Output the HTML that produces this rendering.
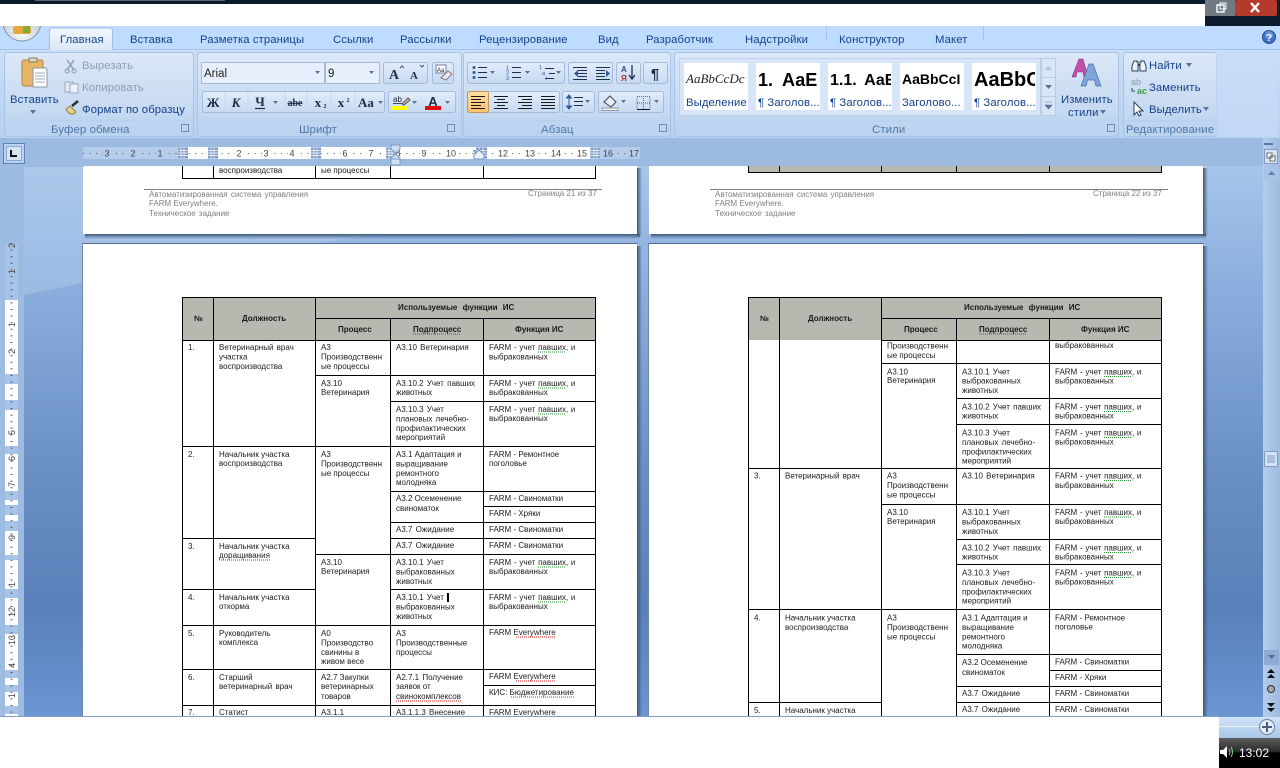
<!DOCTYPE html>
<html lang="ru"><head><meta charset="utf-8"><title>Word</title>
<style>
html,body{margin:0;padding:0;width:1280px;height:768px;overflow:hidden;background:#fff}
svg{display:block;font-family:"Liberation Sans",sans-serif}
.tab{font-size:11.3px;fill:#15428b;letter-spacing:.1px}
.rb{font-size:11.3px;fill:#15428b;letter-spacing:.1px}
.dis{font-size:11.3px;fill:#8b9db5;letter-spacing:.1px}
.gl{font-size:11.4px;fill:#4f76a8;letter-spacing:.1px}
.t{font-size:8px;fill:#1c1c1c}
.b{font-size:8px;font-weight:bold;fill:#1a1a1a}
.j{word-spacing:1px}
.k{word-spacing:.5px}
.f{font-size:8px;fill:#808080}
.rn{font-size:9px;fill:#444}
.l{stroke:#000;stroke-width:1;fill:none;shape-rendering:crispEdges}
.grp{fill:url(#btn);stroke:#a3bcdc;stroke-width:1}
.red{stroke:#d02020;stroke-width:1;stroke-dasharray:1 1;fill:none}
.grn{stroke:#2f9a3a;stroke-width:1;stroke-dasharray:1 1;fill:none}
.ar{fill:#5a7396}
.ic{stroke:#2a3f60;stroke-width:1;fill:none}
</style></head><body>
<svg width="1280" height="768" viewBox="0 0 1280 768" xmlns="http://www.w3.org/2000/svg">
<defs>
<linearGradient id="doc" x1="0" y1="0" x2="0" y2="1"><stop offset="0" stop-color="#a8c5ea"/><stop offset=".2" stop-color="#8db0df"/><stop offset=".55" stop-color="#6a8fc4"/><stop offset=".8" stop-color="#5a80ba"/><stop offset="1" stop-color="#6a96d2"/></linearGradient>
<linearGradient id="ribbon" x1="0" y1="0" x2="0" y2="1"><stop offset="0" stop-color="#c9def8"/><stop offset="1" stop-color="#b7d1f1"/></linearGradient>
<linearGradient id="group" x1="0" y1="0" x2="0" y2="1"><stop offset="0" stop-color="#dce8f8"/><stop offset=".75" stop-color="#c4d8f1"/><stop offset=".76" stop-color="#c0d7f1"/><stop offset="1" stop-color="#bbd3ef"/></linearGradient>
<linearGradient id="btn" x1="0" y1="0" x2="0" y2="1"><stop offset="0" stop-color="#e3edfa"/><stop offset="1" stop-color="#c5d9f2"/></linearGradient>
<linearGradient id="act" x1="0" y1="0" x2="0" y2="1"><stop offset="0" stop-color="#fde0a8"/><stop offset="1" stop-color="#fbc06c"/></linearGradient>
<linearGradient id="tabg" x1="0" y1="0" x2="0" y2="1"><stop offset="0" stop-color="#f2f7fe"/><stop offset="1" stop-color="#dce8f8"/></linearGradient>
<linearGradient id="shR" x1="0" y1="0" x2="1" y2="0"><stop offset="0" stop-color="#3f5878"/><stop offset="1" stop-color="#3f5878" stop-opacity="0"/></linearGradient>
<linearGradient id="shB" x1="0" y1="0" x2="0" y2="1"><stop offset="0" stop-color="#3f5878"/><stop offset="1" stop-color="#3f5878" stop-opacity="0"/></linearGradient>
<linearGradient id="sb" x1="0" y1="0" x2="1" y2="0"><stop offset="0" stop-color="#b6cdec"/><stop offset="1" stop-color="#9dbae0"/></linearGradient>
<linearGradient id="tb" x1="0" y1="0" x2="0" y2="1"><stop offset="0" stop-color="#5c5c5c"/><stop offset=".45" stop-color="#2c2c2c"/><stop offset=".5" stop-color="#000"/><stop offset="1" stop-color="#000"/></linearGradient>
<linearGradient id="st" x1="0" y1="0" x2="0" y2="1"><stop offset="0" stop-color="#d0e2f8"/><stop offset="1" stop-color="#a9c6ea"/></linearGradient>
<radialGradient id="orb" cx=".5" cy=".8" r=".7"><stop offset="0" stop-color="#fbfbf4"/><stop offset=".7" stop-color="#c8d2dc"/><stop offset="1" stop-color="#8898ae"/></radialGradient>
<clipPath id="s2"><rect x="757" y="63" width="62" height="30"/></clipPath>
<clipPath id="s3"><rect x="829" y="63" width="62" height="30"/></clipPath>
<clipPath id="s4"><rect x="901" y="63" width="62" height="30"/></clipPath>
<clipPath id="s5"><rect x="973" y="63" width="62" height="30"/></clipPath>
<clipPath id="s1"><rect x="685" y="63" width="62" height="30"/></clipPath>
</defs>

<!-- document background -->
<rect x="0" y="166" width="1280" height="552" fill="url(#doc)"/>
<path d="M24 166H640V190L83 283 24 295Z" fill="#b2cbec" opacity=".45"/>
<rect x="0" y="138" width="24" height="580" fill="#9ebbe2"/>

<!-- pages -->
<rect x="637" y="168" width="5" height="68" fill="url(#shR)"/>
<rect x="85" y="234" width="555" height="5" fill="url(#shB)"/>
<rect x="1203" y="168" width="5" height="68" fill="url(#shR)"/>
<rect x="651" y="234" width="555" height="5" fill="url(#shB)"/>
<rect x="637" y="246" width="5" height="472" fill="url(#shR)"/>
<rect x="1203" y="246" width="5" height="472" fill="url(#shR)"/>
<rect x="83" y="166" width="554" height="68" fill="#fff"/>
<rect x="649" y="166" width="554" height="68" fill="#fff"/>
<rect x="83" y="244" width="554" height="474" fill="#fff"/>
<rect x="649" y="244" width="554" height="474" fill="#fff"/>
<path d="M82.500 243.500H637.500M648.500 243.500H1203.500" stroke="#55708f" fill="none"/>
<path d="M82.500 243.500V718M648.500 243.500V718" stroke="#6f88a8" fill="none"/>

<!-- top slice page 21 -->
<path class="l" d="M182.500 166V178.500H595.500V166M213.500 166V178M315.500 166V178M390.500 166V178M483.500 166V178"/>
<text class="t" x="219" y="173">воспроизводства</text>
<text class="t" x="321" y="173">ые процессы</text>
<path d="M144 189.500H602" stroke="#808080"/>
<text class="f j" x="149" y="197">Автоматизированная система управления</text>
<text class="f" x="149" y="206">FARM Everywhere.</text>
<text class="f j" x="149" y="216">Техническое задание</text>
<text class="f" x="528" y="196">Страница 21 из 37</text>

<!-- top slice page 22 -->
<rect x="748" y="166" width="414" height="6" fill="#b8b8b0"/>
<path class="l" d="M748.500 166V172.500H1161.500V166M779.500 166V172M881.500 166V172M956.500 166V172M1049.500 166V172"/>
<path d="M710 189.500H1168" stroke="#808080"/>
<text class="f j" x="715" y="197">Автоматизированная система управления</text>
<text class="f" x="715" y="206">FARM Everywhere.</text>
<text class="f j" x="715" y="216">Техническое задание</text>
<text class="f" x="1093" y="196">Страница 22 из 37</text>

<!-- table 1 -->
<rect x="182" y="297" width="414" height="43" fill="#b8b8b0"/>
<path class="l" d="M182.500 716V297.500H595.500V716M213.500 297V716M315.500 297V716M390.500 318V716M483.500 318V716
M315 318.500H596M182 340.500H596M315 375.500H596M390 401.500H596M182 446.500H596M390 491.500H596M483 506.500H596M390 522.500H596
M182 538.500H316M390 538.500H596M315 554.500H596M182 589.500H316M390 589.500H596M182 625.500H596M182 669.500H596M483 685.500H596M182 705.500H596"/>
<text class="b" x="194" y="321">№</text>
<text class="b" x="242" y="321">Должность</text>
<text class="b" x="398" y="310" style="word-spacing:3px">Используемые функции ИС</text>
<text class="b" x="338" y="332">Процесс</text>
<text class="b" x="413" y="332">Подпроцесс</text>
<path class="red" d="M413 334H461"/>
<text class="b" x="515" y="332">Функция ИС</text>

<text class="t" x="188" y="350">1.</text>
<text class="t j" x="219" y="350">Ветеринарный врач</text><text class="t" x="219" y="359.500">участка</text><text class="t" x="219" y="369">воспроизводства</text>
<text class="t" x="321" y="350">А3</text><text class="t" x="321" y="359.500">Производственн</text><text class="t" x="321" y="369">ые процессы</text>
<text class="t j" x="396" y="350">А3.10 Ветеринария</text>
<text class="t k" x="489" y="350">FARM - учет павших, и</text><text class="t" x="489" y="359.500">выбракованных</text><path class="grn" d="M538 352H565"/>

<text class="t" x="321" y="386">А3.10</text><text class="t" x="321" y="395">Ветеринария</text>
<text class="t j" x="396" y="386">А3.10.2 Учет павших</text><text class="t" x="396" y="395">животных</text>
<text class="t k" x="489" y="386">FARM - учет павших, и</text><text class="t" x="489" y="395">выбракованных</text><path class="grn" d="M538 388H565"/>

<text class="t j" x="396" y="412">А3.10.3 Учет</text><text class="t j" x="396" y="421.500">плановых лечебно-</text><text class="t" x="396" y="431">профилактических</text><text class="t" x="396" y="440">мероприятий</text>
<text class="t k" x="489" y="412">FARM - учет павших, и</text><text class="t" x="489" y="421">выбракованных</text><path class="grn" d="M538 414H565"/>

<text class="t" x="188" y="457">2.</text>
<text class="t" x="219" y="457">Начальник участка</text><text class="t" x="219" y="466">воспроизводства</text>
<text class="t" x="321" y="457">А3</text><text class="t" x="321" y="466.500">Производственн</text><text class="t" x="321" y="476">ые процессы</text>
<text class="t" x="396" y="457">А3.1 Адаптация и</text><text class="t" x="396" y="466.500">выращивание</text><text class="t" x="396" y="476">ремонтного</text><text class="t" x="396" y="485">молодняка</text>
<text class="t" x="489" y="457">FARM - Ремонтное</text><text class="t" x="489" y="466">поголовье</text>

<text class="t" x="396" y="501">А3.2 Осеменение</text><text class="t" x="396" y="511">свиноматок</text>
<text class="t" x="489" y="501">FARM - Свиноматки</text>
<text class="t" x="489" y="516">FARM - Хряки</text>
<text class="t j" x="396" y="532">А3.7 Ожидание</text><text class="t" x="489" y="532">FARM - Свиноматки</text>

<text class="t" x="188" y="549">3.</text>
<text class="t" x="219" y="549">Начальник участка</text><text class="t" x="219" y="558">доращивания</text><path class="red" d="M219 560H270"/>
<text class="t j" x="396" y="548">А3.7 Ожидание</text><text class="t" x="489" y="548">FARM - Свиноматки</text>

<text class="t" x="321" y="565">А3.10</text><text class="t" x="321" y="574">Ветеринария</text>
<text class="t j" x="396" y="565">А3.10.1 Учет</text><text class="t" x="396" y="574.500">выбракованных</text><text class="t" x="396" y="584">животных</text>
<text class="t k" x="489" y="565">FARM - учет павших, и</text><text class="t" x="489" y="574">выбракованных</text><path class="grn" d="M538 567H565"/>

<text class="t" x="188" y="600">4.</text>
<text class="t" x="219" y="600">Начальник участка</text><text class="t" x="219" y="609">откорма</text>
<text class="t j" x="396" y="600">А3.10.1 Учет</text><text class="t" x="396" y="609.500">выбракованных</text><text class="t" x="396" y="619">животных</text>
<rect x="447" y="593" width="2" height="9" fill="#000"/>
<text class="t k" x="489" y="600">FARM - учет павших, и</text><text class="t" x="489" y="609">выбракованных</text><path class="grn" d="M538 602H565"/>

<text class="t" x="188" y="636">5.</text>
<text class="t" x="219" y="636">Руководитель</text><text class="t" x="219" y="645">комплекса</text>
<text class="t" x="321" y="636">А0</text><text class="t" x="321" y="645.500">Производство</text><text class="t" x="321" y="655">свинины в</text><text class="t" x="321" y="664">живом весе</text>
<text class="t" x="396" y="636">А3</text><text class="t" x="396" y="645.500">Производственные</text><text class="t" x="396" y="655">процессы</text>
<text class="t" x="489" y="635">FARM Everywhere</text><path class="red" d="M516 637H556"/>

<text class="t" x="188" y="680">6.</text>
<text class="t" x="219" y="680">Старший</text><text class="t j" x="219" y="689">ветеринарный врач</text>
<text class="t" x="321" y="680">А2.7 Закупки</text><text class="t" x="321" y="689">ветеринарных</text><text class="t" x="321" y="699">товаров</text>
<text class="t j" x="396" y="680">А2.7.1 Получение</text><text class="t" x="396" y="689">заявок от</text><text class="t" x="396" y="699">свинокомплексов</text><path class="red" d="M396 701H461"/>
<text class="t" x="489" y="679">FARM Everywhere</text><path class="red" d="M516 681H556"/>
<text class="t" x="489" y="695">КИС: Бюджетирование</text><path class="red" d="M511 697H574"/>

<text class="t" x="188" y="715">7.</text><text class="t" x="219" y="715">Статист</text><text class="t" x="321" y="715">А3.1.1</text>
<text class="t j" x="396" y="715">А3.1.1.3 Внесение</text><text class="t" x="489" y="715">FARM Everywhere</text>

<!-- table 2 -->
<rect x="748" y="297" width="414" height="43" fill="#b8b8b0"/>
<path class="l" d="M748.500 716V297.500H1161.500V716M779.500 297V716M881.500 297V716M956.500 318V716M1049.500 318V716
M881 318.500H1162M881 340.500H1162M881 363.500H1162M956 398.500H1162M956 424.500H1162M748 468.500H1162M881 504.500H1162M956 539.500H1162M956 564.500H1162
M748 609.500H1162M956 654.500H1162M1049 670.500H1162M956 686.500H1162M748 702.500H882M956 702.500H1162"/>
<text class="b" x="760" y="321">№</text>
<text class="b" x="808" y="321">Должность</text>
<text class="b" x="964" y="310" style="word-spacing:3px">Используемые функции ИС</text>
<text class="b" x="904" y="332">Процесс</text>
<text class="b" x="979" y="332">Подпроцесс</text>
<path class="red" d="M979 334H1027"/>
<text class="b" x="1081" y="332">Функция ИС</text>

<text class="t" x="887" y="348.500">Производственн</text><text class="t" x="887" y="358">ые процессы</text>
<text class="t" x="1055" y="348">выбракованных</text>

<text class="t" x="887" y="374.500">А3.10</text><text class="t" x="887" y="383">Ветеринария</text>
<text class="t j" x="962" y="374.500">А3.10.1 Учет</text><text class="t" x="962" y="383.500">выбракованных</text><text class="t" x="962" y="393">животных</text>
<text class="t k" x="1055" y="374.500">FARM - учет павших, и</text><text class="t" x="1055" y="383.500">выбракованных</text><path class="grn" d="M1104 376.500H1131"/>

<text class="t j" x="962" y="409.500">А3.10.2 Учет павших</text><text class="t" x="962" y="418.500">животных</text>
<text class="t k" x="1055" y="409.500">FARM - учет павших, и</text><text class="t" x="1055" y="418.500">выбракованных</text><path class="grn" d="M1104 411.500H1131"/>

<text class="t j" x="962" y="435.500">А3.10.3 Учет</text><text class="t j" x="962" y="445">плановых лечебно-</text><text class="t" x="962" y="454.500">профилактических</text><text class="t" x="962" y="463.500">мероприятий</text>
<text class="t k" x="1055" y="435.500">FARM - учет павших, и</text><text class="t" x="1055" y="444.500">выбракованных</text><path class="grn" d="M1104 437.500H1131"/>

<text class="t" x="754" y="478.500">3.</text><text class="t j" x="785" y="478.500">Ветеринарный врач</text>
<text class="t" x="887" y="478.500">А3</text><text class="t" x="887" y="488">Производственн</text><text class="t" x="887" y="497.500">ые процессы</text>
<text class="t j" x="962" y="478.500">А3.10 Ветеринария</text>
<text class="t k" x="1055" y="478.500">FARM - учет павших, и</text><text class="t" x="1055" y="488">выбракованных</text><path class="grn" d="M1104 480.500H1131"/>

<text class="t" x="887" y="515">А3.10</text><text class="t" x="887" y="524">Ветеринария</text>
<text class="t j" x="962" y="515">А3.10.1 Учет</text><text class="t" x="962" y="524.500">выбракованных</text><text class="t" x="962" y="534">животных</text>
<text class="t k" x="1055" y="515">FARM - учет павших, и</text><text class="t" x="1055" y="524">выбракованных</text><path class="grn" d="M1104 517H1131"/>

<text class="t j" x="962" y="550.500">А3.10.2 Учет павших</text><text class="t" x="962" y="559.500">животных</text>
<text class="t k" x="1055" y="550.500">FARM - учет павших, и</text><text class="t" x="1055" y="559.500">выбракованных</text><path class="grn" d="M1104 552.500H1131"/>

<text class="t j" x="962" y="575.500">А3.10.3 Учет</text><text class="t j" x="962" y="585">плановых лечебно-</text><text class="t" x="962" y="594.500">профилактических</text><text class="t" x="962" y="603.500">мероприятий</text>
<text class="t k" x="1055" y="575.500">FARM - учет павших, и</text><text class="t" x="1055" y="584.500">выбракованных</text><path class="grn" d="M1104 577.500H1131"/>

<text class="t" x="754" y="620.500">4.</text><text class="t" x="785" y="620.500">Начальник участка</text><text class="t" x="785" y="630">воспроизводства</text>
<text class="t" x="887" y="620.500">А3</text><text class="t" x="887" y="630">Производственн</text><text class="t" x="887" y="639.500">ые процессы</text>
<text class="t" x="962" y="620.500">А3.1 Адаптация и</text><text class="t" x="962" y="630">выращивание</text><text class="t" x="962" y="639.500">ремонтного</text><text class="t" x="962" y="648.500">молодняка</text>
<text class="t" x="1055" y="620.500">FARM - Ремонтное</text><text class="t" x="1055" y="629.500">поголовье</text>

<text class="t" x="962" y="665">А3.2 Осеменение</text><text class="t" x="962" y="675">свиноматок</text>
<text class="t" x="1055" y="664.500">FARM - Свиноматки</text>
<text class="t" x="1055" y="680">FARM - Хряки</text>
<text class="t j" x="962" y="696">А3.7 Ожидание</text><text class="t" x="1055" y="696">FARM - Свиноматки</text>
<text class="t" x="754" y="713">5.</text><text class="t" x="785" y="713">Начальник участка</text>
<text class="t j" x="962" y="712">А3.7 Ожидание</text><text class="t" x="1055" y="712">FARM - Свиноматки</text>

<!-- scrollbar -->
<rect x="1263" y="138" width="17" height="580" fill="url(#sb)"/>
<rect x="1264" y="143" width="9" height="2" fill="#5a7aa6"/>
<rect x="1264.500" y="149.500" width="13" height="14" fill="#d8e4f3" stroke="#7f9ac0"/>
<path d="M1267 153h5v5h-5zM1270 156h5v5h-5z" fill="#fff" stroke="#445" stroke-width=".8"/>
<rect x="1264" y="166" width="15" height="14" fill="#a8c3e6"/>
<path d="M1268 175l3.500-4 3.500 4z" fill="#5f7fa8"/>
<rect x="1264.500" y="451.500" width="13" height="15" rx="1" fill="#d3e2f5" stroke="#7f9ac0"/>
<path d="M1267 456h8M1267 458h8M1267 460h8M1267 462h8" stroke="#7f9ac0"/>
<rect x="1264" y="650" width="15" height="15" fill="#8faad0"/>
<path d="M1268 655l3.500 4 3.500-4z" fill="#4f6d96"/>
<path d="M1267 673h8l-4-4zM1267 678h8l-4-4z" fill="#111"/>
<circle cx="1271" cy="689" r="3.500" fill="#a0a8b0" stroke="#333"/>
<path d="M1267 703h8l-4 4zM1267 708h8l-4 4z" fill="#111"/>

<!-- vertical ruler -->
<rect x="5" y="243" width="13" height="473" fill="#a8c3e8"/>
<path fill="#fff" d="M5 300h13v74H5zM5 384h13v16H5zM5 410h13v36H5zM5 454h13v37H5zM5 500h13v5H5zM5 515h13v6H5zM5 531h13v24H5zM5 560h13v29H5zM5 598h13v27H5zM5 634h13v36H5zM5 678h13v7H5zM5 692h13v14H5zM5 714h13v2H5z"/>
<path d="M11.500 243V716" stroke="#555" stroke-dasharray="1 5.600" stroke-width="2"/>
<g class="rn">
<text transform="translate(15 248) rotate(-90)">2</text><text transform="translate(15 274) rotate(-90)">1</text>
<text transform="translate(15 327) rotate(-90)">1</text><text transform="translate(15 354) rotate(-90)">2</text>
<text transform="translate(15 435) rotate(-90)">5</text><text transform="translate(15 461) rotate(-90)">6</text>
<text transform="translate(15 487) rotate(-90)">7</text><text transform="translate(15 540) rotate(-90)">9</text>
<text transform="translate(15 587) rotate(-90)">1</text><text transform="translate(15 617) rotate(-90)">12</text>
<text transform="translate(15 645) rotate(-90)">13</text><text transform="translate(15 668) rotate(-90)">4</text>
<text transform="translate(15 698) rotate(-90)">1</text>
</g>

<!-- ruler row -->
<rect x="0" y="138" width="1263" height="28" fill="#9dbae1"/>
<rect x="24" y="166" width="60" height="1" fill="#8aa8d2" opacity=".5"/>
<rect x="3.500" y="143.500" width="21" height="20" fill="#bcd3f0" stroke="#5b84bd"/>
<rect x="6.500" y="146.500" width="15" height="14" fill="#d6e4f6" stroke="#8ba8d0"/>
<path d="M11 150v6h6" stroke="#111" stroke-width="2" fill="none"/>
<rect x="83" y="147" width="557" height="12" fill="#b5cceb"/>
<path fill="#fff" d="M188 147h20v12h-20zM218 147h93v12h-93zM321 147h65v12h-65zM396 147h80v12h-80zM487 147h103v12H487z"/>
<path d="M83 153.500H640" stroke="#555" stroke-dasharray="1 5.600"/>
<g fill="#7f99c4">
<rect x="178" y="148" width="10" height="10"/><rect x="208" y="148" width="10" height="10"/><rect x="311" y="148" width="10" height="10"/><rect x="386" y="148" width="10" height="10"/><rect x="476" y="148" width="11" height="10"/><rect x="591" y="148" width="9" height="10"/>
</g>
<g stroke="#fff" stroke-width=".7"><path d="M178 150.500h10M178 153h10M178 155.500h10M181 148v10M184 148v10M208 150.500h10M208 153h10M208 155.500h10M211 148v10M214 148v10M311 150.500h10M311 153h10M311 155.500h10M314 148v10M317 148v10M386 150.500h10M386 153h10M386 155.500h10M389 148v10M392 148v10M476 150.500h11M476 153h11M476 155.500h11M479 148v10M483 148v10M591 150.500h9M591 153h9M591 155.500h9M594 148v10M597 148v10"/></g>
<g class="rn" text-anchor="middle">
<rect x="103" y="148" width="8" height="10" fill="#b5cceb"/><rect x="129" y="148" width="8" height="10" fill="#b5cceb"/><rect x="156" y="148" width="8" height="10" fill="#b5cceb"/>
<rect x="235" y="148" width="8" height="10" fill="#fff"/><rect x="262" y="148" width="8" height="10" fill="#fff"/><rect x="288" y="148" width="8" height="10" fill="#fff"/><rect x="341" y="148" width="8" height="10" fill="#fff"/><rect x="367" y="148" width="8" height="10" fill="#fff"/><rect x="420" y="148" width="8" height="10" fill="#fff"/><rect x="445" y="148" width="12" height="10" fill="#fff"/><rect x="497" y="148" width="12" height="10" fill="#fff"/><rect x="524" y="148" width="12" height="10" fill="#fff"/><rect x="550" y="148" width="12" height="10" fill="#fff"/><rect x="576" y="148" width="12" height="10" fill="#fff"/>
<rect x="602" y="148" width="12" height="10" fill="#b5cceb"/><rect x="628" y="148" width="12" height="10" fill="#b5cceb"/>
<text x="107" y="156.500">3</text><text x="133" y="156.500">2</text><text x="160" y="156.500">1</text><text x="239" y="156.500">2</text><text x="266" y="156.500">3</text><text x="292" y="156.500">4</text><text x="345" y="156.500">6</text><text x="371" y="156.500">7</text><text x="398" y="156.500">8</text><text x="424" y="156.500">9</text><text x="451" y="156.500">10</text><text x="477" y="156.500">11</text><text x="503" y="156.500">12</text><text x="530" y="156.500">13</text><text x="556" y="156.500">14</text><text x="582" y="156.500">15</text><text x="608" y="156.500">16</text><text x="634" y="156.500">17</text>
</g>
<path d="M391 145h9v4l-4.500 4-4.500-4zM391 158l4.500-4 4.500 4v4h-9z" fill="#cfe0f5" stroke="#7f99c4"/>
<rect x="391" y="159" width="9" height="6" fill="#cfe0f5" stroke="#7f99c4"/>
<path d="M474 159v-4l5-5 5 5v4z" fill="#e8f0fb" stroke="#7f99c4"/>

<!-- ribbon -->
<rect x="0" y="26" width="1280" height="24" fill="#bfdbff"/>
<rect x="0" y="50" width="1280" height="88" fill="url(#ribbon)"/>
<path d="M0 49.500H1280" stroke="#a5c3e8"/>
<path d="M49.500 50V31q0-3 3-3h57q3 0 3 3V50" fill="url(#tabg)" stroke="#9fbfe3"/>
<path d="M826.500 26V41M983.500 26V41" stroke="#a9c3e3"/>
<circle cx="22" cy="22" r="19" fill="url(#orb)" stroke="#8195ad"/>
<rect x="13" y="26" width="18" height="8" rx="2" fill="#e8a93a"/><rect x="23" y="26" width="7" height="7" fill="#7fae3c"/>

<text class="tab" x="60" y="43">Главная</text>
<text class="tab" x="130" y="43">Вставка</text>
<text class="tab" x="200" y="43">Разметка страницы</text>
<text class="tab" x="333" y="43">Ссылки</text>
<text class="tab" x="400" y="43">Рассылки</text>
<text class="tab" x="479" y="43">Рецензирование</text>
<text class="tab" x="598" y="43">Вид</text>
<text class="tab" x="646" y="43">Разработчик</text>
<text class="tab" x="745" y="43">Надстройки</text>
<text class="tab" x="839" y="43">Конструктор</text>
<text class="tab" x="935" y="43">Макет</text>
<circle cx="1269" cy="37" r="6.500" fill="#3f74c8" stroke="#2a4f96"/><circle cx="1269" cy="35" r="4" fill="#7fa8e6" opacity=".6"/>
<text x="1269" y="41" text-anchor="middle" font-size="10" font-weight="bold" fill="#fff">?</text>

<!-- groups -->
<rect x="4.500" y="52.500" width="189" height="84" rx="3" fill="url(#group)" stroke="#a9c4e6"/>
<rect x="197.500" y="52.500" width="264" height="84" rx="3" fill="url(#group)" stroke="#a9c4e6"/>
<rect x="463.500" y="52.500" width="207" height="84" rx="3" fill="url(#group)" stroke="#a9c4e6"/>
<rect x="674.500" y="52.500" width="444" height="84" rx="3" fill="url(#group)" stroke="#a9c4e6"/>
<rect x="1123.500" y="52.500" width="93" height="84" rx="3" fill="url(#group)" stroke="#a9c4e6"/>
<rect x="1216" y="52" width="62" height="85" fill="#c9dcf5" opacity=".6"/>
<path d="M5 121H193M198 121H461M464 121H670M675 121H1118M1124 121H1216" stroke="#b5cdea"/>
<text class="gl" x="51" y="133">Буфер обмена</text>
<text class="gl" x="299" y="133">Шрифт</text>
<text class="gl" x="541" y="133">Абзац</text>
<text class="gl" x="872" y="133">Стили</text>
<text class="gl" x="1126" y="133">Редактирование</text>
<g fill="none" stroke="#6f8db5"><rect x="181.500" y="124.500" width="7" height="7"/><rect x="447.500" y="124.500" width="7" height="7"/><rect x="659.500" y="124.500" width="7" height="7"/><rect x="1107.500" y="124.500" width="7" height="7"/></g>

<!-- clipboard -->
<rect x="22" y="60" width="21" height="26" rx="2" fill="#e8b567" stroke="#b5853f"/>
<rect x="29" y="58" width="8" height="4" fill="#d8d8d8" stroke="#8a7a50"/>
<path d="M33 68h13l1 2v17H33z" fill="#fff" stroke="#8a98a8"/>
<path d="M35 73h10M35 76h10M35 79h10M35 82h10" stroke="#9aa8b8"/>
<text class="rb" x="10" y="103">Вставить</text>
<path class="ar" d="M30 110h6l-3 4z"/>
<path d="M67 60l7 10M74 60l-7 10" stroke="#8b9db5" stroke-width="1.500"/><circle cx="67" cy="71" r="2" fill="none" stroke="#8b9db5"/><circle cx="74" cy="71" r="2" fill="none" stroke="#8b9db5"/>
<text class="dis" x="82" y="69">Вырезать</text>
<rect x="65" y="82" width="8" height="10" fill="#dfe8f3" stroke="#9aa9bd"/><rect x="70" y="84" width="8" height="9" fill="#eef3f9" stroke="#9aa9bd"/>
<text class="dis" x="82" y="91">Копировать</text>
<path d="M66 109l4-3 6 6-3 2q-4 1-7-5z" fill="#e6cf86" stroke="#8f7f44"/><path d="M72 106l6-5" stroke="#2f2f2f" stroke-width="2.500"/>
<text class="rb" x="82" y="113">Формат по образцу</text>

<!-- font -->
<rect x="201.500" y="62.500" width="123" height="21" fill="#e6effb" stroke="#a5bcd9"/>
<rect x="325.500" y="62.500" width="54" height="21" fill="#e6effb" stroke="#a5bcd9"/>
<text x="204" y="77" font-size="11.500" fill="#222">Arial</text><text x="328" y="77" font-size="11.500" fill="#222">9</text>
<path class="ar" d="M315 71h5l-2.500 3zM369 71h5l-2.500 3z"/>
<rect x="383.500" y="62.500" width="44" height="21" rx="2" class="grp"/>
<text x="394" y="79" text-anchor="middle" font-family="Liberation Serif" font-size="14" font-weight="bold" fill="#1f3050">A</text>
<text x="414" y="79" text-anchor="middle" font-family="Liberation Serif" font-size="11" font-weight="bold" fill="#1f3050">A</text>
<path d="M400 68l2-2 2 2M420 65l2 2 2-2" fill="none" stroke="#3a5a90"/>
<rect x="432.500" y="62.500" width="21" height="21" rx="2" class="grp"/>
<rect x="436" y="65" width="10" height="8" fill="#fff" stroke="#6a7f9c"/><text x="437" y="72" font-size="6" fill="#223">Aa</text>
<path d="M441 78l7-7 4 3-6 6z" fill="#f3e7ea" stroke="#7a7a8a"/>
<rect x="202.500" y="91.500" width="182" height="21" rx="2" class="grp"/>
<g font-family="Liberation Serif" font-weight="bold" fill="#1d2c48" text-anchor="middle">
<text x="213" y="107" font-size="13">Ж</text>
<text x="236" y="107" font-size="13" font-style="italic">К</text>
<text x="260" y="106" font-size="13">Ч</text>
<text x="295" y="106" font-size="10" style="text-decoration:line-through">abe</text>
<text x="318" y="107" font-size="13">x</text><text x="325" y="108" font-size="6">2</text>
<text x="341" y="107" font-size="13">x</text><text x="348" y="102" font-size="6">2</text>
<text x="366" y="107" font-size="13">Aa</text>
</g>
<path d="M255 108.500h10" stroke="#1d2c48" stroke-width="1.200"/>
<path class="ar" d="M273 101h5l-2.500 3zM378 101h5l-2.500 3z"/>
<path d="M225 92v20M248 92v20M285 92v20M307 92v20M331 92v20M355 92v20" stroke="#c6d8ef"/>
<rect x="388.500" y="91.500" width="67" height="21" rx="2" class="grp"/>
<text x="393" y="102" font-size="8" fill="#223" style="text-decoration:underline">ab</text>
<path d="M402 104l6-6 2 2-6 5z" fill="#c9c2a8" stroke="#555"/>
<rect x="392" y="106" width="16" height="4" fill="#ff0"/>
<path class="ar" d="M412 101h5l-2.500 3zM445 101h5l-2.500 3z"/>
<text x="433" y="106" text-anchor="middle" font-size="13" font-weight="bold" fill="#1d2c48">A</text>
<rect x="425" y="106" width="16" height="4" fill="#e01010"/>

<!-- paragraph -->
<rect x="467.500" y="62.500" width="97" height="21" rx="2" class="grp"/>
<rect x="568.500" y="62.500" width="44" height="21" rx="2" class="grp"/>
<rect x="616.500" y="62.500" width="24" height="21" rx="2" class="grp"/>
<rect x="643.500" y="62.500" width="24" height="21" rx="2" class="grp"/>
<g stroke="#1f2f4c"><path d="M478 67.500h9M478 72.500h9M478 77.500h9M512 67.500h9M512 72.500h9M512 77.500h9M545 68.500h9M549 73.500h6M545 78.500h9"/></g>
<g fill="#2f5a98"><circle cx="474" cy="67.500" r="1.500"/><circle cx="474" cy="72.500" r="1.500"/><circle cx="474" cy="77.500" r="1.500"/></g>
<g font-size="5.500" fill="#2f5a98"><text x="506" y="69.500">1</text><text x="506" y="74.500">2</text><text x="506" y="80">3</text><text x="539" y="69">1</text><text x="542" y="75">a</text><text x="546" y="80">i</text></g>
<path class="ar" d="M490 71h5l-2.500 3zM525 71h5l-2.500 3zM556 71h5l-2.500 3z"/>
<g stroke="#1f2f4c"><path d="M573 67.500h14M578 70.500h9M578 73.500h9M578 76.500h9M573 79.500h14M596 67.500h14M596 70.500h9M596 73.500h9M596 76.500h9M596 79.500h14"/></g>
<path d="M578 70l-4 3.500 4 3.500zM606 70l4 3.500-4 3.500z" fill="#2f5a98"/>
<text x="621" y="72" font-size="8" font-weight="bold" fill="#2f4f8a">А</text><text x="621" y="81" font-size="8" font-weight="bold" fill="#b03030">Я</text>
<path d="M632 65v13M629 75l3 4 3-4" stroke="#1f2f4c" fill="none" stroke-width="1.300"/>
<text x="655" y="79" text-anchor="middle" font-size="15" font-weight="bold" fill="#1f2f4c">¶</text>

<rect x="467.500" y="91.500" width="92" height="21" rx="2" class="grp"/>
<rect x="467.500" y="91.500" width="21" height="21" rx="2" fill="url(#act)" stroke="#c2945a"/>
<rect x="562.500" y="91.500" width="32" height="21" rx="2" class="grp"/>
<rect x="598.500" y="91.500" width="65" height="21" rx="2" class="grp"/>
<g stroke="#1a1a1a"><path d="M471 96.500h14M471 99.500h10M471 102.500h14M471 105.500h10M471 108.500h14"/>
<path d="M494 96.500h14M497 99.500h8M494 102.500h14M497 105.500h8M494 108.500h14"/>
<path d="M518 96.500h14M522 99.500h10M518 102.500h14M522 105.500h10M518 108.500h14"/>
<path d="M541 96.500h14M541 99.500h14M541 102.500h14M541 105.500h14M541 108.500h14"/></g>
<path d="M569 95l-2.500 3h5zM569 109l-2.500-3h5zM569 98v8" stroke="#2f5a98" fill="#2f5a98"/>
<path d="M574 97.500h9M574 101.500h9M574 105.500h9" stroke="#1f2f4c"/>
<path class="ar" d="M585 100h5l-2.500 3zM621 100h5l-2.500 3zM654 100h5l-2.500 3z"/>
<path d="M604 102l6-6 6 6-5 5z" fill="#e6eef8" stroke="#445"/><rect x="602" y="108" width="16" height="2.500" fill="#eef3e2" stroke="#99a"/>
<path d="M637 96.500h13v13h-13zM643.500 96v14M637 103h13" stroke="#506a90" stroke-dasharray="1 1" fill="none"/><path d="M637 109.500h13" stroke="#1a1a1a"/>

<!-- styles -->
<rect x="679.500" y="58.500" width="361" height="57" fill="#d6e5f7" stroke="#bdd1ec"/>
<g fill="#fff"><rect x="684" y="63" width="64" height="47"/><rect x="756" y="63" width="64" height="47"/><rect x="828" y="63" width="64" height="47"/><rect x="900" y="63" width="64" height="47"/><rect x="972" y="63" width="64" height="47"/></g>
<text clip-path="url(#s1)" x="686" y="83" font-family="Liberation Serif" font-style="italic" font-size="13" fill="#222">AaBbCcDc</text>
<text clip-path="url(#s2)" x="758" y="86" font-size="18" font-weight="bold" fill="#000" style="word-spacing:4px">1. АаЕ</text>
<text clip-path="url(#s3)" x="830" y="85" font-size="16" font-weight="bold" fill="#000" style="word-spacing:3px">1.1. АаЕ</text>
<text clip-path="url(#s4)" x="902" y="84" font-size="14" font-weight="bold" fill="#000">AaBbCcI</text>
<text clip-path="url(#s5)" x="974" y="86" font-size="20" font-weight="bold" fill="#000">AaBbC</text>
<text class="rb" x="686" y="106">Выделение</text>
<text class="rb" x="758" y="106">¶ Заголов...</text>
<text class="rb" x="830" y="106">¶ Заголов...</text>
<text class="rb" x="902" y="106">Заголово...</text>
<text class="rb" x="974" y="106">¶ Заголов...</text>
<rect x="1041.500" y="58.500" width="14" height="19" fill="#d9e6f6" stroke="#b5cbe8"/>
<rect x="1041.500" y="77.500" width="14" height="19" fill="#d9e6f6" stroke="#b5cbe8"/>
<rect x="1041.500" y="96.500" width="14" height="19" fill="#d9e6f6" stroke="#b5cbe8"/>
<path d="M1045 70l3.500-4 3.500 4z" fill="#b0c2d8"/><path d="M1045 85l3.500 4 3.500-4z" fill="#5a7396"/><path d="M1045 102h7M1045 105l3.500 4 3.500-4z" fill="#5a7396" stroke="#5a7396" stroke-width=".6"/>
<path d="M1072 77l7-18h4l5 18h-4l-1-5h-6l-1 5z" fill="#c24fa8" stroke="#8f2f80" stroke-width=".6"/>
<path d="M1081 86l8-22h4l8 22h-5l-1.500-6h-7L1086 86z" fill="#7ea4d8" stroke="#456fae" stroke-width=".7"/>
<text class="rb" x="1061" y="103">Изменить</text>
<text class="rb" x="1068" y="116">стили</text>
<path class="ar" d="M1100 110h6l-3 4z"/>

<!-- editing -->
<path d="M1132 71v-5l2-5h3v1h1v9h-6zM1140 71v-9h1v-1h3l2 5v5z" fill="#eef3fa" stroke="#2a3f60"/>
<path d="M1138 65h2" stroke="#2a3f60" stroke-width="2"/>
<text class="rb" x="1149" y="69">Найти</text><path class="ar" d="M1186 63h6l-3 4z"/>
<text x="1131" y="85" font-size="9" fill="#8a9ab0">ab</text><text x="1137" y="94" font-size="9" font-weight="bold" fill="#3e9a42">ac</text><path d="M1132 88v3h3" stroke="#2a3f60" fill="none"/>
<text class="rb" x="1149" y="91">Заменить</text>
<path d="M1134 102v13l3-3 2 4 2-1-2-4h4z" fill="#fff" stroke="#2a3f60"/>
<text class="rb" x="1149" y="113">Выделить</text><path class="ar" d="M1203 107h6l-3 4z"/>

<!-- cover: white strip and window chrome -->
<rect x="0" y="0" width="1280" height="4" fill="#0c1b2b"/>
<rect x="35" y="0" width="190" height="1" fill="#5a6672"/>
<rect x="1205" y="4" width="75" height="22" fill="#0c1b2b"/>
<rect x="0" y="4" width="1205" height="22" fill="#fff"/>
<rect x="1205" y="0" width="30" height="16" fill="#6f7a82"/>
<rect x="1235" y="0" width="42" height="16" rx="2" fill="#b53a2c"/>
<rect x="1217" y="5" width="7" height="7" fill="none" stroke="#fff" stroke-width="1.400"/><rect x="1220" y="3" width="6" height="6" fill="none" stroke="#fff"/>
<path d="M1251 3l8 9M1259 3l-8 9" stroke="#fff" stroke-width="2.400"/>

<!-- bottom -->
<rect x="0" y="716" width="1219" height="52" fill="#fff"/>
<path d="M0 716.500H1219" stroke="#7f9fc9"/>
<rect x="1219" y="717" width="61" height="21" fill="url(#st)"/>
<path d="M1219 726.500H1262" stroke="#e8f1fb"/>
<circle cx="1267" cy="727" r="7.500" fill="#e2ebf6" stroke="#6a7f9c"/>
<path d="M1262 727h10M1267 722v10" stroke="#4a5f80" stroke-width="2"/>
<rect x="1219" y="738" width="61" height="30" fill="url(#tb)"/>
<path d="M1220 750h3l4-4v12l-4-4h-3z" fill="#fff"/><path d="M1229 749q2 3 0 6M1231 747q3 5 0 10" stroke="#7fd07f" fill="none"/>
<text x="1239" y="757" font-size="12" fill="#fff">13:02</text>
</svg>
</body></html>
